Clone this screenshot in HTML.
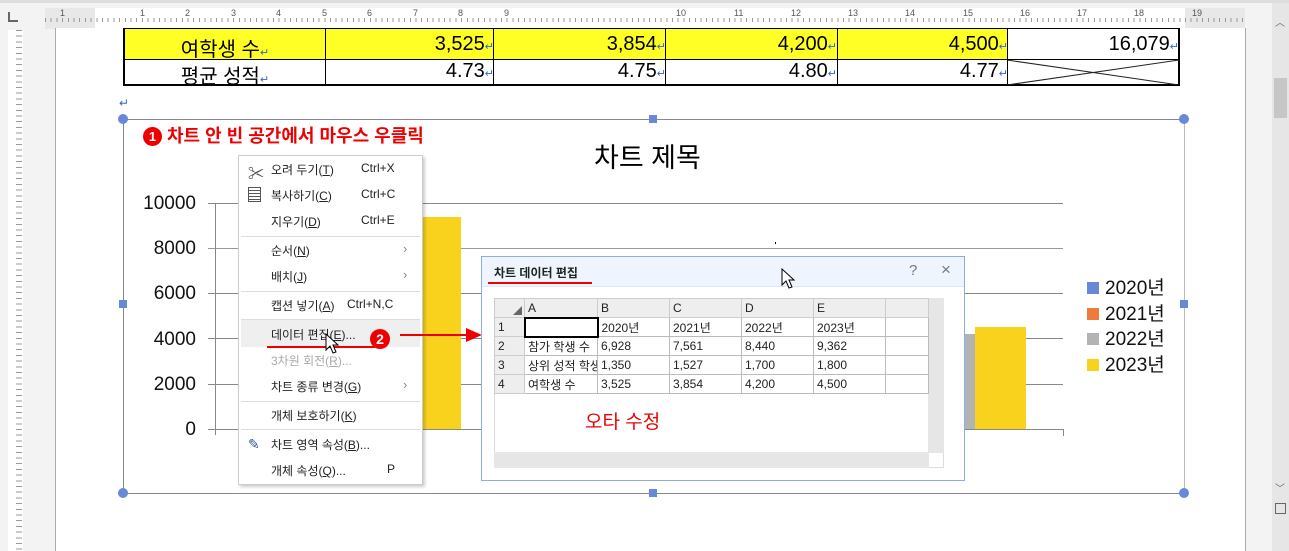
<!DOCTYPE html>
<html><head><meta charset="utf-8"><style>
*{margin:0;padding:0;box-sizing:border-box}
body{width:1289px;height:551px;overflow:hidden;background:#f3f3f3;font-family:"Liberation Sans","Noto Sans CJK KR",sans-serif;position:relative}
.a{position:absolute}
.mi{position:absolute;left:32px;font-size:12px;color:#222}
.sc{position:absolute;left:122px;font-size:12px;color:#222}
.sep{position:absolute;left:2px;right:2px;height:1px;background:#ddd}
.arr{position:absolute;left:164px;font-size:13px;color:#888}
.g td{border:1px solid #bbb;height:19px;font-size:12px;padding-left:3px;color:#222;white-space:nowrap;overflow:hidden}
.g tr:first-child td{background:#eee;border-color:#ccc}
.g td:first-child{background:#eee;border-color:#ccc}
.n{position:absolute;text-align:right;font-size:20px;color:#000}
.n i{font-style:normal;color:#36c;font-size:11px}
</style></head><body>
<div class="a" style="left:0;top:0;width:1289px;height:3px;background:#ddd"></div>
<div class="a" style="left:45px;top:8px;width:1175px;height:21px;background:#fff"></div>
<div class="a" style="left:45px;top:8px;width:50px;height:21px;background:#e8e8e8"></div>
<div class="a" style="left:1185px;top:8px;width:60px;height:21px;background:#e8e8e8"></div>
<div class="a" style="left:45px;top:18px;width:1200px;height:4px;background-image:repeating-linear-gradient(90deg,#999 0 1px,transparent 1px 5.7px)"></div>
<div class="a" style="left:0;top:8px;width:1245px;font-size:9px;color:#555">
<span class="a" style="left:60px">1</span><span class="a" style="left:140px">1</span><span class="a" style="left:185px">2</span><span class="a" style="left:231px">3</span><span class="a" style="left:276px">4</span><span class="a" style="left:322px">5</span><span class="a" style="left:367px">6</span><span class="a" style="left:413px">7</span><span class="a" style="left:458px">8</span><span class="a" style="left:504px">9</span><span class="a" style="left:676px">10</span><span class="a" style="left:734px">11</span><span class="a" style="left:791px">12</span><span class="a" style="left:848px">13</span><span class="a" style="left:905px">14</span><span class="a" style="left:963px">15</span><span class="a" style="left:1020px">16</span><span class="a" style="left:1077px">17</span><span class="a" style="left:1134px">18</span><span class="a" style="left:1192px">19</span></div>
<div class="a" style="left:8px;top:12px;width:10px;height:10px;border-left:2px solid #666;border-bottom:2px solid #666"></div>
<div class="a" style="left:8px;top:30px;width:15px;height:521px;background:#fff"></div>
<div class="a" style="left:16px;top:30px;width:6px;height:521px;background-image:repeating-linear-gradient(180deg,#999 0 1px,transparent 1px 5.7px)"></div>
<div class="a" style="left:55px;top:28px;width:1191px;height:523px;background:#fff;border-left:1px solid #aaa;border-right:1px solid #aaa"></div>
<div class="a" style="left:1272px;top:3px;width:17px;height:548px;background:#e6e6e6"></div>
<div class="a" style="left:1274px;top:78px;width:13px;height:40px;background:#c6c6c6"></div>
<div class="a" style="left:1275px;top:14px;font-size:10px;color:#666">︿</div>
<div class="a" style="left:1275px;top:480px;font-size:10px;color:#666">﹀</div>
<div class="a" style="left:1275px;top:503px;width:11px;height:11px;border:1px solid #666"></div>
<!-- table -->
<div class="a" style="left:123px;top:28px;width:1057px;height:58px;border:2px solid #000;border-top:none"></div>
<div class="a" style="left:125px;top:28px;width:882px;height:31px;background:#ffff26"></div>
<div class="a" style="left:125px;top:59px;width:1053px;height:1px;background:#000"></div>
<div class="a" style="left:125px;top:28px;width:1053px;height:1px;background:#000"></div>
<div class="a" style="left:325px;top:28px;width:1px;height:56px;background:#000"></div>
<div class="a" style="left:493px;top:28px;width:1px;height:56px;background:#000"></div>
<div class="a" style="left:665px;top:28px;width:1px;height:56px;background:#000"></div>
<div class="a" style="left:837px;top:28px;width:1px;height:56px;background:#000"></div>
<div class="a" style="left:1007px;top:28px;width:1px;height:56px;background:#000"></div>
<svg class="a" style="left:1007px;top:60px" width="172" height="25"><line x1="0" y1="0" x2="172" y2="25" stroke="#222"/><line x1="0" y1="25" x2="172" y2="0" stroke="#222"/></svg>
<div class="n" style="left:125px;width:200px;top:33px;text-align:center">여학생 수<i>↵</i></div>
<div class="n" style="left:330px;width:164px;top:33px">3,525<i>↵</i></div>
<div class="n" style="left:500px;width:166px;top:33px">3,854<i>↵</i></div>
<div class="n" style="left:670px;width:167px;top:33px">4,200<i>↵</i></div>
<div class="n" style="left:840px;width:168px;top:33px">4,500<i>↵</i></div>
<div class="n" style="left:1010px;width:169px;top:33px">16,079<i>↵</i></div>
<div class="n" style="left:125px;width:200px;top:60px;text-align:center">평균 성적<i>↵</i></div>
<div class="n" style="left:330px;width:164px;top:60px">4.73<i>↵</i></div>
<div class="n" style="left:500px;width:166px;top:60px">4.75<i>↵</i></div>
<div class="n" style="left:670px;width:167px;top:60px">4.80<i>↵</i></div>
<div class="n" style="left:840px;width:168px;top:60px">4.77<i>↵</i></div>
<div class="a" style="left:119px;top:96px;color:#36c;font-size:12px">↵</div>
<!-- chart frame -->
<div class="a" style="left:123px;top:119px;width:1062px;height:375px;border:1px solid #888;border-right-color:#bbb"></div>
<div class="a" style="left:118px;top:114px;width:10px;height:10px;border-radius:50%;background:#6a88d8"></div>
<div class="a" style="left:1179px;top:114px;width:10px;height:10px;border-radius:50%;background:#6a88d8"></div>
<div class="a" style="left:118px;top:488px;width:10px;height:10px;border-radius:50%;background:#6a88d8"></div>
<div class="a" style="left:1179px;top:488px;width:10px;height:10px;border-radius:50%;background:#6a88d8"></div>
<div class="a" style="left:649px;top:115px;width:8px;height:8px;background:#6a88d8"></div>
<div class="a" style="left:649px;top:489px;width:8px;height:8px;background:#6a88d8"></div>
<div class="a" style="left:119px;top:300px;width:8px;height:8px;background:#6a88d8"></div>
<div class="a" style="left:1180px;top:300px;width:8px;height:8px;background:#6a88d8"></div>
<div class="a" style="left:143px;top:122px;font-size:18px;color:#e00;font-weight:bold;white-space:nowrap"><span style="display:inline-block;width:19px;height:19px;border-radius:50%;background:#e00;color:#fff;font-size:13px;text-align:center;line-height:19px;vertical-align:1px">1</span> 차트 안 빈 공간에서 마우스 우클릭</div>
<div class="a" style="left:594px;top:136px;font-size:27px;color:#000">차트 제목</div>
<div class="a" style="left:120px;top:181px;width:76px;font-size:19px;color:#111;text-align:right;line-height:45.2px">10000<br>8000<br>6000<br>4000<br>2000<br>0</div>
<div class="a" style="left:208px;top:203px;width:855px;height:1px;background:#888"></div>
<div class="a" style="left:208px;top:248px;width:855px;height:1px;background:#999"></div>
<div class="a" style="left:208px;top:293px;width:855px;height:1px;background:#888"></div>
<div class="a" style="left:208px;top:338px;width:855px;height:1px;background:#888"></div>
<div class="a" style="left:208px;top:384px;width:855px;height:1px;background:#888"></div>
<div class="a" style="left:208px;top:429px;width:855px;height:1px;background:#888"></div>
<div class="a" style="left:215px;top:203px;width:1px;height:232px;background:#888"></div>
<div class="a" style="left:1063px;top:429px;width:1px;height:7px;background:#888"></div>
<div class="a" style="left:420px;top:217px;width:41px;height:212px;background:#f8d21c"></div>
<div class="a" style="left:963px;top:334px;width:12px;height:95px;background:#b3b3b3"></div>
<div class="a" style="left:975px;top:327px;width:51px;height:102px;background:#f8d21c"></div>
<div class="a" style="left:775px;top:242px;width:1px;height:2px;background:#000"></div>
<div class="a" style="left:1087px;top:276px;font-size:19px;color:#111;line-height:25.7px">
<div><span style="display:inline-block;width:12px;height:12px;background:#6a88d8;margin-right:6px"></span>2020년</div>
<div><span style="display:inline-block;width:12px;height:12px;background:#ee7a3c;margin-right:6px"></span>2021년</div>
<div><span style="display:inline-block;width:12px;height:12px;background:#b3b3b3;margin-right:6px"></span>2022년</div>
<div><span style="display:inline-block;width:12px;height:12px;background:#f8d21c;margin-right:6px"></span>2023년</div></div>
<!-- context menu -->
<div class="a" style="left:238px;top:155px;width:185px;height:330px;background:#fff;border:1px solid #ccc;box-shadow:2px 2px 3px rgba(0,0,0,.2)">
<div class="a" style="left:2px;top:164px;width:179px;height:27px;background:#efefef"></div>
<div class="a" style="left:9px;top:4px;font-size:16px;color:#444">✂</div>
<div class="a" style="left:9px;top:31px;width:13px;height:15px;border:1px solid #555;background:repeating-linear-gradient(180deg,#fff 0 2px,#555 2px 3px)"></div>
<div class="a" style="left:9px;top:280px;font-size:14px;color:#358">✎</div>
<div class="mi" style="top:5px">오려 두기(<u>T</u>)</div><div class="sc" style="top:5px">Ctrl+X</div>
<div class="mi" style="top:31px">복사하기(<u>C</u>)</div><div class="sc" style="top:31px">Ctrl+C</div>
<div class="mi" style="top:57px">지우기(<u>D</u>)</div><div class="sc" style="top:57px">Ctrl+E</div>
<div class="sep" style="top:80px"></div>
<div class="mi" style="top:86px">순서(<u>N</u>)</div><div class="arr" style="top:85px">›</div>
<div class="mi" style="top:112px">배치(<u>J</u>)</div><div class="arr" style="top:111px">›</div>
<div class="sep" style="top:135px"></div>
<div class="mi" style="top:141px">캡션 넣기(<u>A</u>)</div><div class="sc" style="top:141px;left:108px">Ctrl+N,C</div>
<div class="sep" style="top:163px"></div>
<div class="mi" style="top:170px">데이터 편집(<u>E</u>)...</div>
<div class="a" style="left:28px;top:190px;width:108px;height:2px;background:#e00"></div>
<div class="a" style="left:131px;top:173px;width:20px;height:20px;border-radius:50%;background:#e00;color:#fff;font-size:14px;font-weight:bold;text-align:center;line-height:20px">2</div>
<div class="mi" style="top:196px;color:#aaa">3차원 회전(<u>R</u>)...</div>
<div class="mi" style="top:222px">차트 종류 변경(<u>G</u>)</div><div class="arr" style="top:221px">›</div>
<div class="sep" style="top:245px"></div>
<div class="mi" style="top:251px">개체 보호하기(<u>K</u>)</div>
<div class="sep" style="top:273px"></div>
<div class="mi" style="top:280px">차트 영역 속성(<u>B</u>)...</div>
<div class="mi" style="top:306px">개체 속성(<u>Q</u>)...</div><div class="sc" style="top:306px;left:148px">P</div>
</div>
<svg class="a" style="left:325px;top:333px" width="15" height="22"><path d="M1 1 L1 17 L5 13 L8 20 L11 19 L8 12 L13 12 Z" fill="#fff" stroke="#000"/></svg>
<div class="a" style="left:400px;top:334px;width:70px;height:2px;background:#e00"></div>
<svg class="a" style="left:466px;top:328px" width="16" height="14"><path d="M0 0 L16 7 L0 14 Z" fill="#e00"/></svg>
<!-- dialog -->
<div class="a" style="left:481px;top:256px;width:484px;height:225px;background:#fff;border:1px solid #8fabe8">
<div class="a" style="left:0;top:0;width:482px;height:30px;background:#eef5ff;border-bottom:1px solid #dde6f3"></div>
<div class="a" style="left:12px;top:7px;font-size:12px;font-weight:bold;color:#222">차트 데이터 편집</div>
<div class="a" style="left:6px;top:25px;width:104px;height:2px;background:#e00"></div>
<div class="a" style="left:427px;top:5px;font-size:15px;color:#777">?</div>
<div class="a" style="left:459px;top:3px;font-size:17px;color:#777">×</div>
<div class="a" style="left:12px;top:41px;width:450px;height:170px;background:#fff;border:1px solid #ddd"></div>
<div class="a" style="left:446px;top:41px;width:16px;height:155px;background:#e6e6e6"></div>
<div class="a" style="left:12px;top:195px;width:435px;height:16px;background:#e6e6e6"></div>
<table class="g a" style="left:12px;top:41px;border-collapse:collapse;table-layout:fixed;width:434px">
<colgroup><col style="width:30px"><col style="width:73px"><col style="width:72px"><col style="width:72px"><col style="width:72px"><col style="width:72px"><col style="width:43px"></colgroup>
<tr><td style="position:relative"><span style="position:absolute;right:2px;bottom:2px;width:0;height:0;border-left:9px solid transparent;border-bottom:9px solid #666"></span></td><td>A</td><td>B</td><td>C</td><td>D</td><td>E</td><td></td></tr>
<tr><td>1</td><td style="border:2px solid #000"></td><td>2020년</td><td>2021년</td><td>2022년</td><td>2023년</td><td style="background:#fff"></td></tr>
<tr><td>2</td><td>참가 학생 수</td><td>6,928</td><td>7,561</td><td>8,440</td><td>9,362</td><td style="background:#fff"></td></tr>
<tr><td>3</td><td>상위 성적 학생</td><td>1,350</td><td>1,527</td><td>1,700</td><td>1,800</td><td style="background:#fff"></td></tr>
<tr><td>4</td><td>여학생 수</td><td>3,525</td><td>3,854</td><td>4,200</td><td>4,500</td><td style="background:#fff"></td></tr>
</table>
<div class="a" style="left:103px;top:150px;font-size:19px;color:#e00">오타 수정</div>
</div>
<svg class="a" style="left:781px;top:268px" width="15" height="22"><path d="M1 1 L1 17 L5 13 L8 20 L11 19 L8 12 L13 12 Z" fill="#fff" stroke="#000"/></svg>
</body></html>
